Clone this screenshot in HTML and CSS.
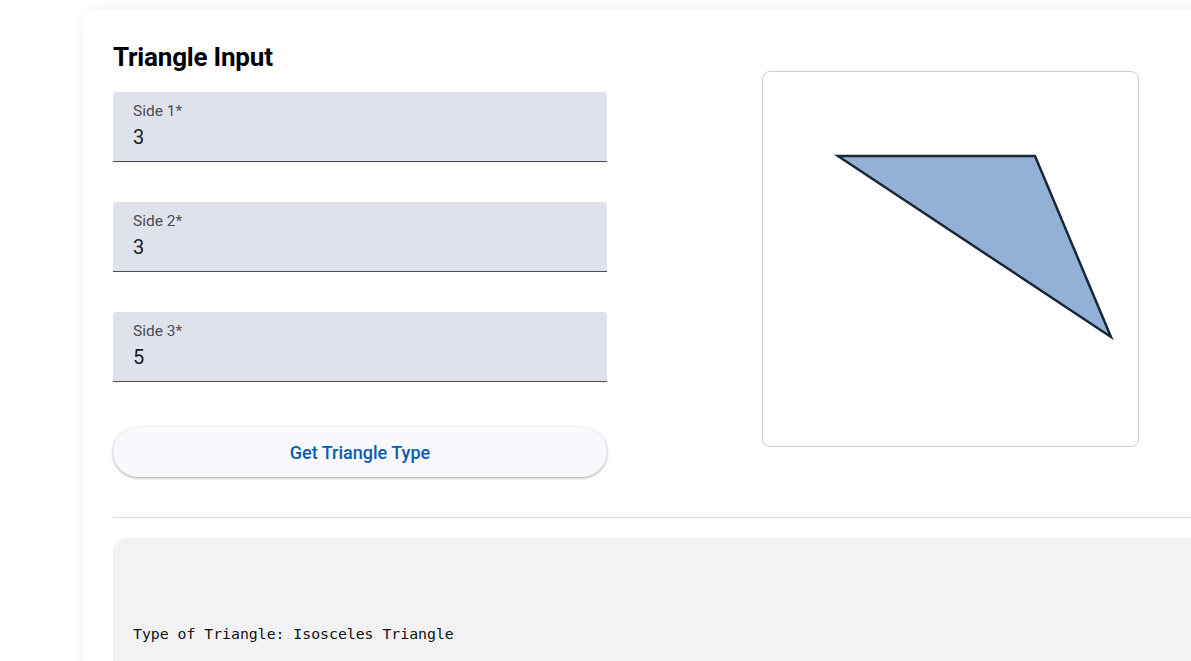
FILE: index.html
```html
<!DOCTYPE html>
<html>
<head>
<meta charset="utf-8">
<link rel="stylesheet" href="styles.css">
</head>
<body>
<div class="card">
  <div class="top">
    <div class="form">
      <h2 class="title">Triangle Input</h2>
      <div class="field">
        <span class="label">Side 1*</span>
        <span class="value">3</span>
      </div>
      <div class="field">
        <span class="label">Side 2*</span>
        <span class="value">3</span>
      </div>
      <div class="field">
        <span class="label">Side 3*</span>
        <span class="value">5</span>
      </div>
      <button class="btn">Get Triangle Type</button>
    </div>
    <div class="canvas">
      <svg width="376" height="376" viewBox="0 0 376 376">
        <polygon points="76,85 273,85 349,266" fill="#93b1d5" stroke="#18273a" stroke-width="2.5" stroke-linejoin="miter"/>
      </svg>
    </div>
  </div>
  <hr class="divider">
  <div class="output">
    <pre class="result">Type of Triangle: Isosceles Triangle</pre>
  </div>
</div>
</body>
</html>
```
FILE: styles.css
```css
html, body {
  margin: 0;
  padding: 0;
  overflow: hidden;
  background: #ffffff;
}
body {
  padding: 10px 0 0 83px;
  font-family: Roboto, "Liberation Sans", sans-serif;
}
.card {
  width: 1200px;
  height: 800px;
  background: #fff;
  border-radius: 14px;
  box-shadow: 0 0 14px rgba(0, 0, 0, 0.07);
  padding: 0 0 0 30px;
  box-sizing: border-box;
}
.top {
  display: flex;
  gap: 155px;
}
.form {
  width: 494px;
  display: flex;
  flex-direction: column;
}
.title {
  margin: 0;
  padding-top: 31px;
  padding-bottom: 31px;
  height: 20px;
  font-size: 26px;
  line-height: 32px;
  font-weight: 700;
  color: #000;
  letter-spacing: -0.2px;
}
.field {
  height: 70px;
  background: #dfe2eb;
  border-bottom: 1px solid #4a4d55;
  border-radius: 4px 4px 0 0;
  padding: 9px 20px 0;
  box-sizing: border-box;
  display: flex;
  flex-direction: column;
  margin-bottom: 40px;
}
.field:last-of-type {
  margin-bottom: 45px;
}
.label {
  font-size: 15.5px;
  line-height: 20px;
  color: #4b4d55;
}
.value {
  font-size: 20px;
  line-height: 30px;
  color: #1b1c20;
  margin-top: 1px;
}
.btn {
  height: 50px;
  border: none;
  border-radius: 25px;
  background: #f8f8fd;
  box-shadow: 0 1px 3px rgba(0,0,0,0.35);
  font-family: Roboto, "Liberation Sans", sans-serif;
  font-size: 18px;
  font-weight: 500;
  color: #0b5cb3;
  cursor: pointer;
}
.canvas {
  margin-top: 61px;
  width: 377px;
  height: 376px;
  border: 1px solid #cfcfcf;
  border-radius: 8px;
  box-sizing: border-box;
  overflow: hidden;
}
.canvas svg {
  display: block;
  margin: -1px;
}
.divider {
  margin: 40px 0 0;
  border: none;
  border-top: 1px solid #dcdcdc;
  height: 0;
}
.output {
  margin-top: 20px;
  background: #f2f2f4;
  border-radius: 14px 0 0 0;
  height: 200px;
  padding: 86px 20px 0;
  box-sizing: border-box;
}
.result {
  margin: 0;
  font-family: "DejaVu Sans Mono", "Liberation Mono", monospace;
  font-size: 14.8px;
  line-height: 20px;
  color: #111;
}
```
